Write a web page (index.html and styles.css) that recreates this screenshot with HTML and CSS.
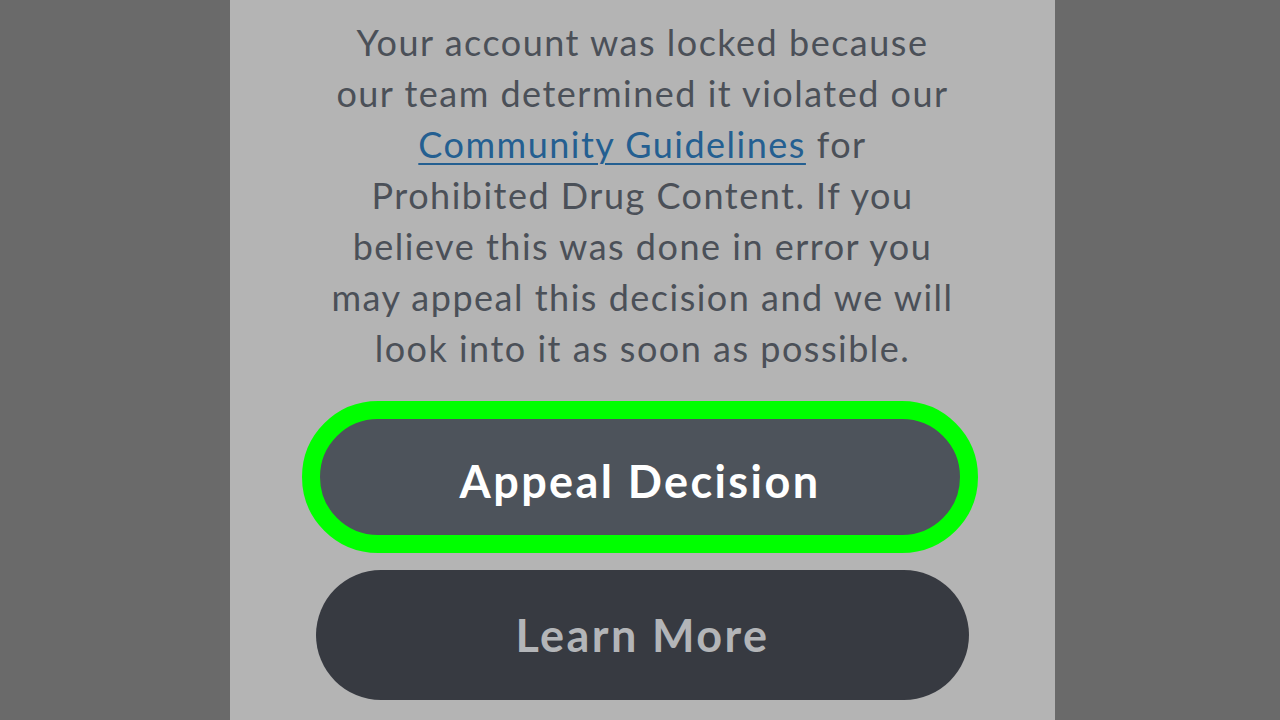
FILE: index.html
```html
<!DOCTYPE html>
<html lang="en">
<head>
  <meta charset="UTF-8">
  <title>Account Locked</title>
  <link rel="stylesheet" href="styles.css">
</head>
<body>

  <div class="panel">
    <!-- Lock message -->
    <p class="message">
      Your account was locked because<br>
      our team determined it violated our<br>
      <a href="#" class="link">Community Guidelines</a> for<br>
      Prohibited Drug Content. If you<br>
      believe this was done in error you<br>
      may appeal this decision and we will<br>
      look into it as soon as possible.
    </p>

    <div class="actions">
      <button class="btn btn-appeal">Appeal Decision</button>
      <button class="btn btn-more">Learn More</button>
    </div>
  </div>

</body>
</html>
```

FILE: styles.css
```css
html, body {
  height: 100%;
}

body {
  margin: 0;
  background: #6a6a6a;
  font-family: Lato, "Open Sans", sans-serif;
  overflow: hidden;
}

.panel {
  width: 825px;
  height: 100%;
  margin-left: 230px;
  background: #b4b4b4;
  display: flex;
  flex-direction: column;
  align-items: center;
}

.message {
  margin: 17px 0 0 0;
  text-align: center;
  font-size: 36px;
  line-height: 51px;
  letter-spacing: 1.5px;
  color: #4b5058;
}

.link {
  color: #245f91;
  text-decoration: underline;
  text-underline-offset: 5px;
  text-decoration-thickness: 2px;
}

.actions {
  display: flex;
  flex-direction: column;
  align-items: center;
  margin-top: 27px;
}

.btn {
  font-family: inherit;
  font-weight: bold;
  font-size: 45px;
  letter-spacing: 2.4px;
  border-radius: 80px;
  cursor: pointer;
}

.btn-appeal {
  width: 676px;
  height: 152px;
  margin-left: -5px;
  padding-top: 8px;
  background: #4d535b;
  color: #ffffff;
  border: 18px solid #00ff00;
}

.btn-more {
  width: 653px;
  height: 130px;
  margin-top: 17px;
  padding-top: 0;
  background: #373a41;
  color: #b3b5b8;
  border: none;
}
```
